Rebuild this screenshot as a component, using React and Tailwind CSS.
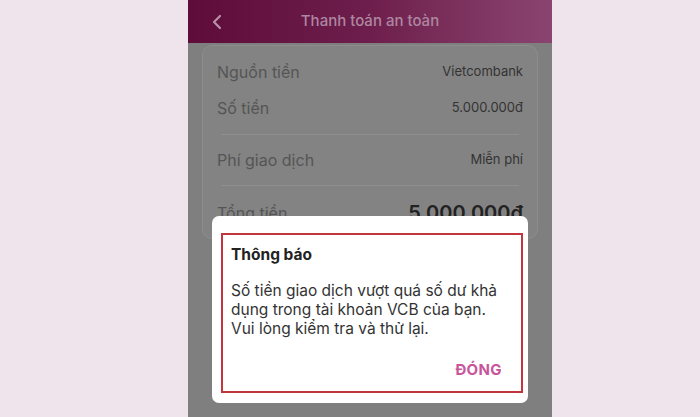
export default function App() {
  return (
    <div className="w-[700px] h-[417px] bg-[#f0e4ec] flex pl-[188px] overflow-hidden" style={{ fontFamily: "Inter, 'Noto Sans', sans-serif" }}>
      <div className="relative w-[364px] h-full flex flex-col bg-[#7f7f7f]">
        {/* header */}
        <div className="h-[43px] bg-gradient-to-r from-[#5e0c3a] via-[#6e1e4c] to-[#8a4470] flex items-center relative shrink-0">
          <svg className="absolute left-[24px] top-[14px]" width="10" height="16" viewBox="0 0 10 16" fill="none">
            <path d="M8 2 L2 8 L8 14" stroke="#b890a8" strokeWidth="2.2" strokeLinecap="round" strokeLinejoin="round" />
          </svg>
          <p className="w-full text-center text-[15px] text-[#ad87a0] font-medium">Thanh toán an toàn</p>
        </div>

        {/* card */}
        <div className="mx-[14px] mt-[2px] h-[194px] rounded-[10px] bg-[#838383] border border-[#8d8d8d] px-[14px] pt-[11px] overflow-hidden">
          <div className="h-[30px] flex items-center justify-between">
            <span className="text-[16px] text-[#555]">Nguồn tiền</span>
            <span className="text-[13px] text-[#333]">Vietcombank</span>
          </div>
          <div className="h-[42px] flex items-center justify-between">
            <span className="text-[16px] text-[#555]">Số tiền</span>
            <span className="text-[13px] text-[#333]">5.000.000đ</span>
          </div>
          <div className="mt-[5px] mx-[4px] border-t border-[#8e8e8e]" />
          <div className="h-[50px] flex items-center justify-between">
            <span className="text-[16px] text-[#555]">Phí giao dịch</span>
            <span className="text-[13px] text-[#333]">Miễn phí</span>
          </div>
          <div className="mx-[4px] border-t border-[#8e8e8e]" />
          <div className="h-[54px] flex items-center justify-between">
            <span className="text-[16px] text-[#555]">Tổng tiền</span>
            <span className="text-[20px] font-semibold text-[#222]">5.000.000đ</span>
          </div>
        </div>

        {/* alert */}
        <div className="absolute left-[24px] top-[216px] w-[316px] h-[187px] bg-white rounded-[7px] pl-[9px] pr-[5px] pt-[17px]">
          <div className="h-[160px] border-2 border-[#c0363c] px-[8px] pt-[8px] flex flex-col">
            <p className="text-[15.5px] font-bold text-[#222]">Thông báo</p>
            <p className="mt-[15px] text-[15.5px] leading-[19px] text-[#333] whitespace-nowrap">
              Số tiền giao dịch vượt quá số dư khả<br />
              dụng trong tài khoản VCB của bạn.<br />
              Vui lòng kiểm tra và thử lại.
            </p>
            <div className="mt-auto mb-[10px] flex justify-end pr-[11px]">
              <span className="text-[15px] font-bold text-[#c8559a] tracking-wide">ĐÓNG</span>
            </div>
          </div>
        </div>
      </div>
    </div>
  );
}
